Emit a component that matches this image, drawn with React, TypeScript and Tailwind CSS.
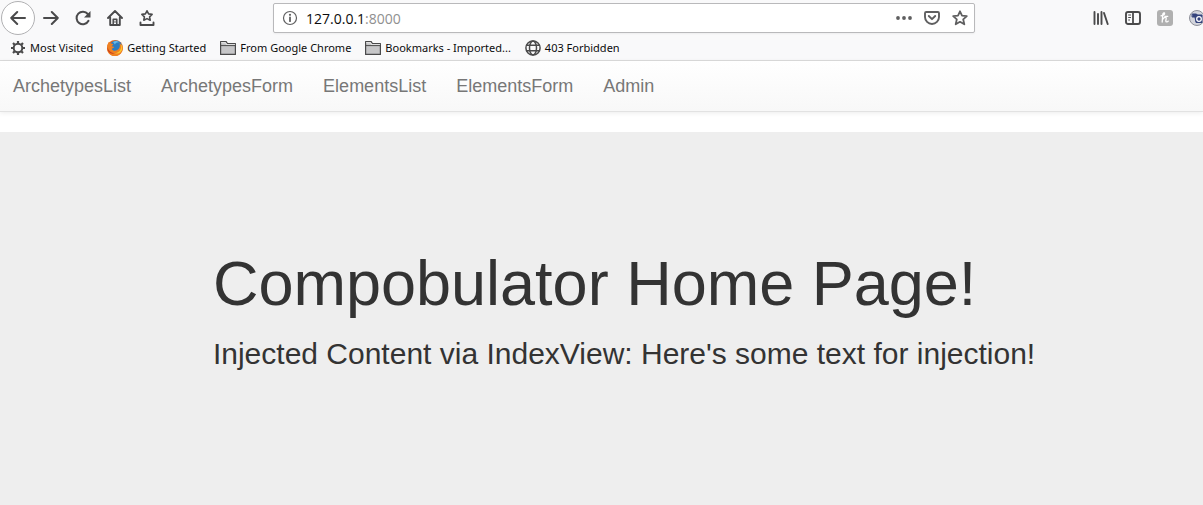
import type { ReactNode } from 'react';

type IconProps = { children: ReactNode; className?: string };

function Icon({ children, className = 'size-4' }: IconProps) {
  return (
    <svg
      viewBox="0 0 16 16"
      className={`${className} shrink-0`}
      fill="none"
      stroke="currentColor"
      strokeWidth="2"
      strokeLinecap="round"
      strokeLinejoin="round"
      aria-hidden="true"
    >
      {children}
    </svg>
  );
}

const starPath = 'M8 1.300l2 4.400 4.800.5-3.600 3.200 1.100 4.900L8 11.800l-4.300 2.500 1.100-4.900L1.200 6.200 6 5.700z';

function BackIcon() {
  return (
    <Icon>
      <path d="M15 8H1.200M7.200 2L1.200 8l6 6" />
    </Icon>
  );
}

function ForwardIcon() {
  return (
    <Icon>
      <path d="M1 8h13.800M8.800 2l6 6-6 6" />
    </Icon>
  );
}

function ReloadIcon() {
  return (
    <Icon>
      <path d="M13.500 10.800A6.300 6.300 0 1 1 12.800 4" />
      <path d="M15.500 1v6.500H9z" fill="currentColor" stroke="none" />
    </Icon>
  );
}

function HomeIcon() {
  return (
    <Icon>
      <path d="M1 8l7-7 7 7M3.200 7.500V15h9.600V7.500" strokeWidth="1.900" />
      <path d="M6.200 14.500V9.200h3.600v5.300" strokeWidth="1.500" />
      <path d="M8 11v1.500" strokeWidth="1" />
    </Icon>
  );
}

function TrayStarIcon() {
  return (
    <Icon>
      <path d="M8 .8l1.600 3.100 3.500.5-2.500 2.400.6 3.400L8 8.600l-3.200 1.600.6-3.400-2.500-2.400 3.500-.5z" strokeWidth="1.600" />
      <path d="M1.500 12.500v2.500h13v-2.500" strokeWidth="1.900" />
    </Icon>
  );
}

function InfoIcon() {
  return (
    <Icon>
      <circle cx="8" cy="8" r="6.500" strokeWidth="1.200" />
      <path d="M8 7.500v3.700" strokeWidth="1.800" />
      <circle cx="8" cy="4.800" r="1.100" fill="currentColor" stroke="none" />
    </Icon>
  );
}

function DotsIcon() {
  return (
    <Icon>
      <g fill="currentColor" stroke="none">
        <circle cx="2" cy="8" r="1.900" />
        <circle cx="8" cy="8" r="1.900" />
        <circle cx="14" cy="8" r="1.900" />
      </g>
    </Icon>
  );
}

function PocketIcon() {
  return (
    <Icon>
      <path d="M2.200 2h11.600c.7 0 1.200.5 1.200 1.200V7A7 7 0 0 1 1 7V3.200C1 2.500 1.500 2 2.200 2z" strokeWidth="1.900" />
      <path d="M4.800 6L8 9.200 11.200 6" strokeWidth="1.900" />
    </Icon>
  );
}

function StarIcon() {
  return (
    <Icon>
      <path d={starPath} strokeWidth="1.800" />
    </Icon>
  );
}

function LibraryIcon() {
  return (
    <Icon>
      <path d="M1.500 2v12M5 4v10M8.500 2v12M11 3l3.700 11" strokeWidth="1.900" />
    </Icon>
  );
}

function SidebarIcon() {
  return (
    <Icon>
      <rect x="1" y="2" width="14" height="12" rx="2" strokeWidth="1.900" />
      <path d="M8 2v12" strokeWidth="1.800" />
      <path d="M3.600 5h2M3.600 7.500h2M3.600 10h1" strokeWidth="1" />
    </Icon>
  );
}

function HoneyIcon() {
  return (
    <Icon>
      <rect x="0" y="0" width="16" height="16" rx="3" fill="#b0b0b0" stroke="none" />
      <path
        d="M4 5.800c2-.2 3.600-1.300 3.600-2.500 0-.9-1.500-.5-1.800.9L5.200 12M5.600 9.500c.9-2 3.700-3 3.600-1.200l-.4 2.600c0 1.400 1.700 1.300 2.400.2M7.800 6.300h3"
        stroke="#fff"
        strokeWidth="1.300"
      />
    </Icon>
  );
}

function CameraIcon() {
  return (
    <Icon>
      <circle cx="8" cy="8" r="7.500" fill="#d3d5dc" stroke="#8d8f98" strokeWidth="1" />
      <path d="M3.500 4h4l1 1H13v7.500H7L6 7H3.500z" fill="#34437c" stroke="#34437c" strokeWidth="1" />
      <circle cx="10" cy="9" r="2.300" fill="#34437c" stroke="#fff" strokeWidth="1.300" />
    </Icon>
  );
}

function GearIcon() {
  return (
    <Icon>
      <circle cx="8" cy="8" r="4.300" />
      <path
        d="M8 1v2.500M8 12.500V15M1 8h2.500M12.500 8H15M3 3l1.700 1.700M11.300 11.300L13 13M13 3l-1.700 1.700M4.700 11.300L3 13"
        strokeLinecap="butt"
        strokeWidth="2.200"
      />
    </Icon>
  );
}

function FirefoxIcon() {
  return (
    <Icon>
      <g stroke="none">
        <circle cx="8" cy="8" r="8" fill="#e66a1c" />
        <circle cx="9" cy="6.500" r="6" fill="#2c7cc0" />
        <path d="M6 2c2-1.500 5-1 6.500.5C10.500 2 8.500 3 8 4.500z" fill="#67b9e8" />
        <path d="M1 3.500C1.500 2.500 2 2 2.300 1.800c.2 1 .7 1.500 1.700 1.700 1 .1 2 .3 2.300.8-.3 1-1.300 1.200-1.600 1.900.6.500 1.800.2 2.500.9-.5 1.200-2 1-2.400 1.900 1.200 2.500 5 2.300 7-.2 1.400-1.800 1.200-4 .6-5.500C14.800 4.800 16 7 15.500 9.600A7.800 7.800 0 0 1 0 8c0-1.800.4-3.300 1-4.500z" fill="#ef8122" />
        <path d="M14 4c1.500 2 1.800 4.500.6 6.700-1.400 2.500-4.200 3.300-6.600 2.600 3-.3 5-2.300 5.800-4.600.5-1.600.6-3.200.2-4.700z" fill="#fcc62f" />
        <path d="M.5 7c1 4 3.500 6 7 6.300-2 .8-4.500.2-6-1.600C.7 10.300.3 8.500.5 7z" fill="#c93d1d" />
      </g>
    </Icon>
  );
}

function FolderIcon() {
  return (
    <Icon>
      <path d="M.6 14.400V1.600h5.600l1.200 2h8v10.800z" fill="#c6c6c8" strokeWidth="1.200" />
      <path d="M1.500 2.700h4.200l1 2h8" stroke="#eeeeee" strokeWidth="1" />
      <path d="M.6 5.600h14.800" strokeWidth="1" />
    </Icon>
  );
}

function GlobeIcon() {
  return (
    <Icon>
      <g strokeWidth="1.500">
        <circle cx="8" cy="8" r="7.100" />
        <ellipse cx="8" cy="8" rx="3.500" ry="7" />
        <path d="M1.700 5.300h12.600M1.700 10.700h12.600" />
      </g>
    </Icon>
  );
}

function ToolButton({ label, children }: { label: string; children: ReactNode }) {
  return (
    <button type="button" aria-label={label} className="flex size-8 shrink-0 items-center justify-center">
      {children}
    </button>
  );
}

const bookmarks = [
  { label: 'Most Visited', icon: <GearIcon /> },
  { label: 'Getting Started', icon: <FirefoxIcon /> },
  { label: 'From Google Chrome', icon: <FolderIcon /> },
  { label: 'Bookmarks - Imported...', icon: <FolderIcon /> },
  { label: '403 Forbidden', icon: <GlobeIcon /> },
];

const pages = ['ArchetypesList', 'ArchetypesForm', 'ElementsList', 'ElementsForm', 'Admin'];

function BrowserChrome() {
  return (
    <header className="overflow-hidden border-b border-[#dcdcdc] bg-[#f9f9fa] font-['Noto_Sans',sans-serif] text-[#4a4a4b]">
      <div className="flex h-9 items-center">
        <div className="flex shrink-0 items-center pl-px">
          <button
            type="button"
            aria-label="Back"
            className="flex size-[34px] items-center justify-center rounded-full border border-[#b1b1b3] bg-white"
          >
            <BackIcon />
          </button>
          <ToolButton label="Forward"><ForwardIcon /></ToolButton>
          <ToolButton label="Reload"><ReloadIcon /></ToolButton>
          <ToolButton label="Home"><HomeIcon /></ToolButton>
          <ToolButton label="Bookmarks tray"><TrayStarIcon /></ToolButton>
        </div>
        <div className="min-w-0 flex-1 px-[110px]">
          <div className="flex h-[30px] items-center rounded-xs border border-[#b9b9bb] bg-white pr-1.5 pl-2 text-[#5f5f60] shadow-xs">
            <InfoIcon />
            <div
              role="textbox"
              aria-label="Address"
              className="min-w-0 flex-1 pl-2 font-['Open_Sans',sans-serif] text-[14px] text-[#0c0c0d]"
            >
              127.0.0.1<span className="text-[#8f8f90]">:8000</span>
            </div>
            <div className="flex items-center gap-3">
              <button type="button" aria-label="Page actions"><DotsIcon /></button>
              <button type="button" aria-label="Save to Pocket"><PocketIcon /></button>
              <button type="button" aria-label="Bookmark this page"><StarIcon /></button>
            </div>
          </div>
        </div>
        <div className="-mr-2.5 flex shrink-0 items-center">
          <ToolButton label="Library"><LibraryIcon /></ToolButton>
          <ToolButton label="Sidebars"><SidebarIcon /></ToolButton>
          <ToolButton label="Honey"><HoneyIcon /></ToolButton>
          <ToolButton label="Screenshot"><CameraIcon /></ToolButton>
        </div>
      </div>
      <div className="flex h-6 items-center gap-3.5 pl-2.5 text-[11px] text-[#0c0c0d]">
        {bookmarks.map((bookmark) => (
          <button key={bookmark.label} type="button" className="flex items-center gap-1 whitespace-nowrap">
            <span className="text-[#4a4a4b]">{bookmark.icon}</span>
            {bookmark.label}
          </button>
        ))}
      </div>
    </header>
  );
}

export default function App() {
  return (
    <div className="flex min-h-screen flex-col bg-white font-['Liberation_Sans',Arial,sans-serif] text-[#333333]">
      <BrowserChrome />
      <nav className="mb-5 border-b border-[#e2e2e2] bg-linear-to-b from-white to-[#f8f8f8] shadow-[0_1px_5px_rgba(0,0,0,0.08)]">
        <ul className="flex h-[50px] items-center gap-[30px] px-[13px] text-[18px] text-[#777777]">
          {pages.map((page) => (
            <li key={page}>
              <a href={`#${page}`}>{page}</a>
            </li>
          ))}
        </ul>
      </nav>
      <main className="flex-1 bg-[#eeeeee] pt-[116px] pb-12 pl-[17.700%]">
        <h1 className="text-[63px] leading-[70px] whitespace-nowrap">Compobulator Home Page!</h1>
        <h2 className="mt-[19px] text-[30px] leading-[33px] whitespace-nowrap">
          Injected Content via IndexView: Here's some text for injection!
        </h2>
      </main>
    </div>
  );
}
